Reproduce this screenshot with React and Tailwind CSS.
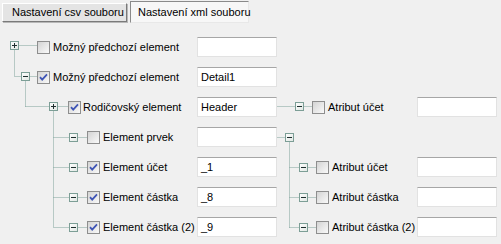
import React from 'react';

const LINE = '#7fa39a';

function Expander({ open, lift = '' }) {
  return (
    <svg width="9" height="9" viewBox="0 0 9 9" className={`shrink-0 block ${lift}`}>
      <defs>
        <linearGradient id="exg" x1="0" y1="0" x2="1" y2="1">
          <stop offset="0" stopColor="#ffffff" />
          <stop offset="1" stopColor="#dfe6e2" />
        </linearGradient>
      </defs>
      <rect x="0.5" y="0.5" width="8" height="8" fill="url(#exg)" stroke="#7c9e96" />
      <line x1="2" y1="4.5" x2="7" y2="4.5" stroke="#1e2e2e" />
      {!open && <line x1="4.5" y1="2" x2="4.5" y2="7" stroke="#1e2e2e" />}
    </svg>
  );
}

function Check({ checked }) {
  return (
    <svg width="13" height="13" viewBox="0 0 13 13" className="shrink-0 block">
      <defs>
        <linearGradient id="cbg" x1="0" y1="0" x2="1" y2="1">
          <stop offset="0" stopColor="#d2d2d2" />
          <stop offset="1" stopColor="#fbfbfb" />
        </linearGradient>
      </defs>
      <rect x="0.5" y="0.5" width="12" height="12" fill="url(#cbg)" stroke="#8e8e8e" />
      {checked && (
        <path d="M3 6.2 L5.2 8.6 L10 3.4" fill="none" stroke="#3f55b5" strokeWidth="1.8" />
      )}
    </svg>
  );
}

function Field({ value }) {
  return (
    <div className="w-[80px] h-[20px] shrink-0 bg-white border border-[#e2e2e2] border-t-[#a6a6a6] flex items-center pl-[3px] leading-none whitespace-nowrap">
      {value}
    </div>
  );
}

// left part of each row: indent of expander, gap to checkbox, label
const rows = [
  { pad: 'pl-[10px]', lift: 'mb-[4px]', gap: 'ml-[18px]', lab: 'ml-[3px]', open: false, checked: false, label: 'Možný předchozí element', value: '' },
  { pad: 'pl-[21px]', lift: 'mb-[2px]', gap: 'ml-[7px]', lab: 'ml-[3px]', open: true, checked: true, label: 'Možný předchozí element', value: 'Detail1' },
  { pad: 'pl-[49px]', lift: 'mb-[2px]', gap: 'ml-[10px]', lab: 'ml-[2px]', open: false, checked: true, label: 'Rodičovský element', value: 'Header', right: { pad: 'pl-[18px]', lift: 'mb-[2px]', label: 'Atribut účet' } },
  { pad: 'pl-[69px]', gap: 'ml-[9px]', lab: 'ml-[3px]', open: true, checked: false, label: 'Element prvek', value: '', right: { pad: 'pl-[8px]', group: true } },
  { pad: 'pl-[69px]', gap: 'ml-[9px]', lab: 'ml-[3px]', open: true, checked: true, label: 'Element účet', value: '_1', right: { pad: 'pl-[22px]', label: 'Atribut účet' } },
  { pad: 'pl-[69px]', gap: 'ml-[9px]', lab: 'ml-[3px]', open: true, checked: true, label: 'Element částka', value: '_8', right: { pad: 'pl-[22px]', label: 'Atribut částka' } },
  { pad: 'pl-[69px]', gap: 'ml-[9px]', lab: 'ml-[3px]', open: true, checked: true, label: 'Element částka (2)', value: '_9', right: { pad: 'pl-[22px]', label: 'Atribut částka (2)' } },
];

// dotted connectors, coordinates relative to the tree area (row height 30)
const segs = [
  [18, 13, 37, 13], [14, 18, 14, 44], [14, 44, 21, 44],
  [30, 44, 37, 44], [25, 49, 25, 74], [25, 74, 49, 74],
  [58, 74, 68, 74], [53, 79, 53, 195],
  [53, 105, 69, 105], [53, 135, 69, 135], [53, 165, 69, 165], [53, 195, 69, 195],
  [78, 105, 87, 105], [78, 135, 87, 135], [78, 165, 87, 165], [78, 195, 87, 195],
  [277, 74, 295, 74], [304, 74, 312, 74],
  [277, 105, 285, 105], [289, 110, 289, 195],
  [289, 135, 299, 135], [289, 165, 299, 165], [289, 195, 299, 195],
  [308, 135, 316, 135], [308, 165, 316, 165], [308, 195, 316, 195],
];

export default function App() {
  return (
    <div className="w-[501px] h-[244px] bg-[#f0f0f0] overflow-hidden text-[11px] text-black font-['Liberation_Sans',Arial,sans-serif]">
      <div className="h-[32px] flex items-start pl-[2px] pt-[1px] whitespace-nowrap">
        <div className="mt-[2px] w-[125px] h-[19px] bg-[#e4e4e4] border border-white border-r-[#7a7a7a] border-b-[#7a7a7a] shadow-[1px_1px_0_#b8b8b8] flex items-center pl-[9px]">
          Nastavení csv souboru
        </div>
        <div className="ml-[3px] w-[119px] h-[22px] bg-[#f7f7f7] border border-[#8a8a8a] border-r-[#e8e8e8] border-b-[#e8e8e8] flex items-center pl-[7px]">
          Nastavení xml souboru
        </div>
      </div>

      <div className="relative">
        <svg width="501" height="212" className="absolute left-0 top-0 pointer-events-none">
          {segs.map(([x1, y1, x2, y2], i) => (
            <line
              key={i}
              x1={x1 + 0.5}
              y1={y1 + 0.5}
              x2={x2 + 0.5}
              y2={y2 + 0.5}
              stroke={LINE}
              strokeDasharray="1 1"
            />
          ))}
        </svg>

        {rows.map((r, i) => (
          <div key={i} className="relative h-[30px] flex items-center">
            <div className={`w-[197px] shrink-0 flex items-center ${r.pad}`}>
              <Expander open={r.open} lift={r.lift} />
              <div className={r.gap}>
                <Check checked={r.checked} />
              </div>
              <span className={`${r.lab} whitespace-nowrap`}>{r.label}</span>
            </div>
            <Field value={r.value} />
            {r.right && (
              <>
                <div className={`w-[140px] shrink-0 flex items-center ${r.right.pad}`}>
                  <Expander open lift={r.right.lift} />
                  {!r.right.group && (
                    <>
                      <div className="ml-[8px]">
                        <Check checked={false} />
                      </div>
                      <span className="ml-[3px] whitespace-nowrap">{r.right.label}</span>
                    </>
                  )}
                </div>
                {!r.right.group && <Field value="" />}
              </>
            )}
          </div>
        ))}
      </div>
    </div>
  );
}
